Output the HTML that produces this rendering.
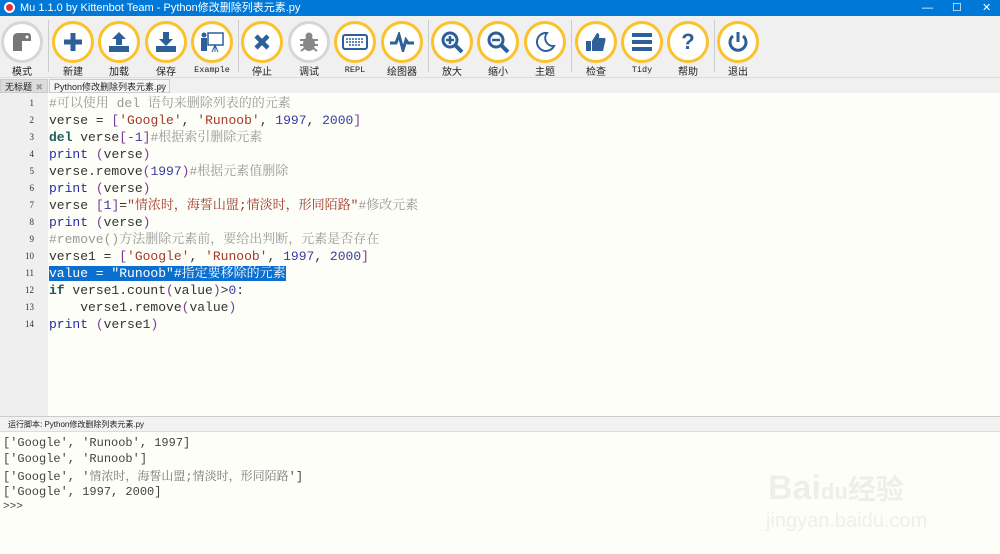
<!DOCTYPE html>
<html><head><meta charset="utf-8"><style>
*{margin:0;padding:0;box-sizing:border-box}
body{width:1000px;height:554px;overflow:hidden;background:#fefef8;font-family:"Liberation Sans","Noto Sans CJK SC",sans-serif;position:relative}
#title{position:absolute;left:0;top:0;width:1000px;height:16px;background:#0078d7;color:#fff;font-size:11px;line-height:16px;padding-left:20px}
#title .lg{position:absolute;left:4px;top:2px;width:11px;height:11px;border-radius:50%;background:#fff}
#title .lg:after{content:"";position:absolute;left:2px;top:2px;width:7px;height:7px;border-radius:50%;background:#d33}
#title .wc{position:absolute;top:0;font-size:11px}
#tb{position:absolute;left:0;top:16px;width:1000px;height:62px;background:#f0f0f0;border-bottom:1px solid #ddd}
.b{position:absolute;top:5px;width:42px;height:42px;margin-left:-21px;border-radius:50%;border:3px solid #fcc22c;background:#fff;display:flex;align-items:center;justify-content:center}
.b.g{border-color:#d6d6d6}
.l{position:absolute;top:47px;width:60px;margin-left:-30px;text-align:center;font-size:10px;color:#222}
.l.m{font-family:"Liberation Mono",monospace;font-size:8.5px;top:49px}
.sep{position:absolute;top:4px;width:1px;height:52px;background:#ccc}
#tabs{position:absolute;left:0;top:78px;width:1000px;height:15px;background:#f0f0f0}
.tab{position:absolute;top:1px;height:14px;font-size:9px;line-height:14px;padding-left:4px;background:#dcdcdc;border:1px solid #ccc;color:#222}
.tab .x{position:absolute;right:4px;color:#999;font-size:9px}
#gut{position:absolute;left:0;top:93px;width:48px;height:323px;background:#efefef}
.ln{position:absolute;left:0;width:34px;text-align:right;font-family:"Liberation Serif",serif;font-size:9px;color:#333}
.cd{position:absolute;left:49px;font-family:"Liberation Mono","Noto Serif CJK SC",monospace;font-size:13px;white-space:pre;color:#333;line-height:17px}
.c{color:#999}.s{color:#a03a2a}.n{color:#3a3aa0}.k{color:#1e5a5a;font-weight:bold}.p{color:#2929a8}.o{color:#7a3a9a}
#run{position:absolute;left:0;top:416px;width:1000px;height:16px;background:#f2f2f2;border-top:1px solid #ccc;border-bottom:1px solid #ddd;font-size:8px;line-height:15px;padding-left:8px;color:#222}
.out{position:absolute;left:3px;font-family:"Liberation Mono","Noto Serif CJK SC",monospace;font-size:12px;color:#444;white-space:pre}
.wm{position:absolute;color:#efefea;font-family:"Liberation Sans",sans-serif}
</style></head><body>
<div id="title"><div class="lg"></div>Mu 1.1.0 by Kittenbot Team - Python修改删除列表元素.py
<span class="wc" style="left:922px">—</span><span class="wc" style="left:952px">☐</span><span class="wc" style="left:982px">✕</span></div>
<div id="tb">
<div class="b g" style="left:22px"><svg width="24" height="24"><path d="M3 8 Q3 3 8 3 H18 Q21 3 21 7 V11 H12 V21 H3Z" fill="#777"/><circle cx="17" cy="7" r="1.5" fill="#fff"/></svg></div><div class="l" style="left:22px">模式</div>
<div class="sep" style="left:48px"></div>
<div class="b" style="left:73px"><svg width="22" height="22"><path d="M11 2V20M2 11H20" stroke="#2d5f98" stroke-width="5"/></svg></div><div class="l" style="left:73px">新建</div>
<div class="b" style="left:119px"><svg width="24" height="24"><path d="M12 2L5 9H9V15H15V9H19Z" fill="#2d5f98"/><rect x="2" y="16" width="20" height="6" fill="#2d5f98"/></svg></div><div class="l" style="left:119px">加载</div>
<div class="b" style="left:166px"><svg width="24" height="24"><path d="M12 16L5 9H9V2H15V9H19Z" fill="#2d5f98"/><rect x="2" y="16" width="20" height="6" fill="#2d5f98"/></svg></div><div class="l" style="left:166px">保存</div>
<div class="b" style="left:212px"><svg width="26" height="24"><rect x="9" y="3" width="15" height="12" fill="none" stroke="#2d5f98" stroke-width="1.5"/><circle cx="5" cy="5" r="2.5" fill="#2d5f98"/><rect x="2" y="8" width="6" height="13" fill="#2d5f98"/><path d="M16 15V22M13 22L16 15L19 22" stroke="#2d5f98" fill="none"/></svg></div><div class="l m" style="left:212px">Example</div>
<div class="sep" style="left:238px"></div>
<div class="b" style="left:262px"><svg width="20" height="20"><path d="M4 4L16 16M16 4L4 16" stroke="#2d5f98" stroke-width="4.5"/></svg></div><div class="l" style="left:262px">停止</div>
<div class="b g" style="left:309px"><svg width="24" height="24"><ellipse cx="12" cy="14" rx="6" ry="7" fill="#888"/><circle cx="12" cy="6" r="3.5" fill="#888"/><path d="M3 10H21M3 15H21M4 21L8 18M20 21L16 18" stroke="#888" stroke-width="2"/></svg></div><div class="l" style="left:309px">调试</div>
<div class="b" style="left:355px"><svg width="26" height="18"><rect x="1" y="2" width="24" height="14" rx="2" fill="none" stroke="#2d5f98" stroke-width="2"/><path d="M4 6H22M4 9H22M7 12H19" stroke="#2d5f98" stroke-width="1.5" stroke-dasharray="2 1"/></svg></div><div class="l m" style="left:355px">REPL</div>
<div class="b" style="left:402px"><svg width="26" height="20"><path d="M1 11H7L10 3L14 18L17 8L19 11H25" stroke="#2d5f98" stroke-width="3" fill="none"/></svg></div><div class="l" style="left:402px">绘图器</div>
<div class="sep" style="left:428px"></div>
<div class="b" style="left:452px"><svg width="24" height="24"><circle cx="10" cy="10" r="7" fill="none" stroke="#2d5f98" stroke-width="3"/><path d="M15 15L22 22" stroke="#2d5f98" stroke-width="4"/><path d="M10 6V14M6 10H14" stroke="#2d5f98" stroke-width="2.5"/></svg></div><div class="l" style="left:452px">放大</div>
<div class="b" style="left:498px"><svg width="24" height="24"><circle cx="10" cy="10" r="7" fill="none" stroke="#2d5f98" stroke-width="3"/><path d="M15 15L22 22" stroke="#2d5f98" stroke-width="4"/><path d="M6 10H14" stroke="#2d5f98" stroke-width="2.5"/></svg></div><div class="l" style="left:498px">缩小</div>
<div class="b" style="left:545px"><svg width="24" height="24"><path d="M14 3A9 9 0 1 0 21 16A8 8 0 0 1 14 3Z" fill="none" stroke="#2d5f98" stroke-width="2"/></svg></div><div class="l" style="left:545px">主题</div>
<div class="sep" style="left:571px"></div>
<div class="b" style="left:596px"><svg width="24" height="24"><rect x="2" y="11" width="5" height="10" fill="#2d5f98"/><path d="M8 11L13 3Q16 3 15 8H21Q22 10 21 12L19 21H8Z" fill="#2d5f98"/></svg></div><div class="l" style="left:596px">检查</div>
<div class="b" style="left:642px"><svg width="24" height="22"><path d="M2 4H22M2 11H22M2 18H22" stroke="#2d5f98" stroke-width="4"/></svg></div><div class="l m" style="left:642px">Tidy</div>
<div class="b" style="left:688px"><span style="color:#2d5f98;font-weight:bold;font-size:22px">?</span></div><div class="l" style="left:688px">帮助</div>
<div class="sep" style="left:714px"></div>
<div class="b" style="left:738px"><svg width="24" height="24"><path d="M7 6A8 8 0 1 0 17 6" fill="none" stroke="#2d5f98" stroke-width="3"/><path d="M12 2V12" stroke="#2d5f98" stroke-width="3"/></svg></div><div class="l" style="left:738px">退出</div>
</div>
<div id="tabs">
<div class="tab" style="left:0;width:48px">无标题<span class="x">✖</span></div>
<div class="tab" style="left:49px;width:121px;background:#f6f6f6">Python修改删除列表元素.py<span class="x">✖</span></div>
</div>
<div id="gut"></div>
<div class="ln" style="top:98px">1</div><div class="ln" style="top:115px">2</div><div class="ln" style="top:132px">3</div><div class="ln" style="top:149px">4</div><div class="ln" style="top:166px">5</div><div class="ln" style="top:183px">6</div><div class="ln" style="top:200px">7</div><div class="ln" style="top:217px">8</div><div class="ln" style="top:234px">9</div><div class="ln" style="top:251px">10</div><div class="ln" style="top:268px">11</div><div class="ln" style="top:285px">12</div><div class="ln" style="top:302px">13</div><div class="ln" style="top:319px">14</div>
<div class="cd" style="top:95px"><span class="c">#可以使用 del 语句来删除列表的的元素</span>
verse = <span class="o">[</span><span class="s">'Google'</span>, <span class="s">'Runoob'</span>, <span class="n">1997</span>, <span class="n">2000</span><span class="o">]</span>
<span class="k">del</span> verse<span class="o">[-</span><span class="n">1</span><span class="o">]</span><span class="c">#根据索引删除元素</span>
<span class="p">print</span> <span class="o">(</span>verse<span class="o">)</span>
verse.remove<span class="o">(</span><span class="n">1997</span><span class="o">)</span><span class="c">#根据元素值删除</span>
<span class="p">print</span> <span class="o">(</span>verse<span class="o">)</span>
verse <span class="o">[</span><span class="n">1</span><span class="o">]</span>=<span class="s">"情浓时，海誓山盟;情淡时，形同陌路"</span><span class="c">#修改元素</span>
<span class="p">print</span> <span class="o">(</span>verse<span class="o">)</span>
<span class="c">#remove()方法删除元素前，要给出判断，元素是否存在</span>
verse1 = <span class="o">[</span><span class="s">'Google'</span>, <span class="s">'Runoob'</span>, <span class="n">1997</span>, <span class="n">2000</span><span class="o">]</span>
<span style="background:#0b6fd0;color:#fff">value = "Runoob"#指定要移除的元素</span>
<span class="k">if</span> verse1.count<span class="o">(</span>value<span class="o">)</span>&gt;<span class="n">0</span>:
    verse1.remove<span class="o">(</span>value<span class="o">)</span>
<span class="p">print</span> <span class="o">(</span>verse1<span class="o">)</span></div>
<div id="run">运行脚本: Python修改删除列表元素.py</div>
<div class="out" style="top:436px">['Google', 'Runoob', 1997]</div>
<div class="out" style="top:452px">['Google', 'Runoob']</div>
<div class="out" style="top:467px">['Google', '<span style="color:#777">情浓时，海誓山盟;情淡时，形同陌路</span>']</div>
<div class="out" style="top:485px">['Google', 1997, 2000]</div>
<div class="out" style="top:501px;font-size:11px">&gt;&gt;&gt;</div>
<div class="wm" style="left:768px;top:468px;font-size:34px;font-weight:bold">Bai<span style="font-size:22px">du</span><span style="font-family:'Noto Sans CJK SC',sans-serif;font-size:28px">经验</span></div>
<div class="wm" style="left:766px;top:510px;font-size:20px">jingyan.baidu.com</div>
</body></html>
